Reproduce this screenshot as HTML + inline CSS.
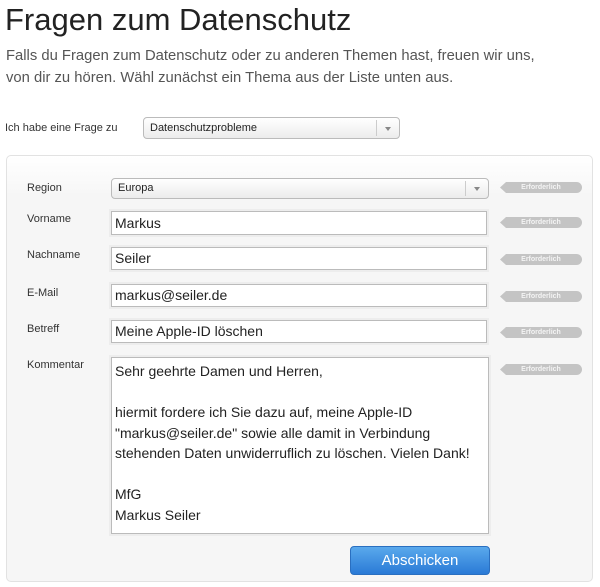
<!DOCTYPE html><html><head><meta charset="utf-8"><style>
body{margin:0;width:600px;height:587px;background:#fff;font-family:"Liberation Sans",sans-serif;position:relative;overflow:hidden}
.a{position:absolute}
h1{position:absolute;left:5px;top:2px;margin:0;font-weight:normal;font-size:31px;color:#222}
.intro{left:6px;top:45px;font-size:14.8px;line-height:22px;color:#555}
.lbl{font-size:11px;color:#333}
.sel{border:1px solid #bbb;border-radius:4px;background:linear-gradient(#fff,#ececec);font-size:11px;color:#222;box-sizing:border-box;padding:0 6px}
.sel:after{content:"";position:absolute;right:0;top:2px;bottom:2px;width:22px;border-left:1px solid #ccc}
.tri{position:absolute;width:0;height:0;border-left:3px solid transparent;border-right:3px solid transparent;border-top:4px solid #888}
.inp{border:1px solid #bbb;background:#fff;box-shadow:0 0 0 2px #ededed;font-size:14px;color:#222;box-sizing:border-box;padding:0 3px}
.badge{left:500px;width:82px;height:11px;background:#c4c4c4;border-radius:6px;font-size:7px;color:#f4f4f4;text-align:center;line-height:11px;font-weight:bold;clip-path:polygon(6px 0,100% 0,100% 100%,6px 100%,0 50%)}
</style></head><body>
<h1>Fragen zum Datenschutz</h1>
<div class="a intro">Falls du Fragen zum Datenschutz oder zu anderen Themen hast, freuen wir uns,<br>von dir zu hören. Wähl zunächst ein Thema aus der Liste unten aus.</div>
<div class="a lbl" style="left:5px;top:122px">Ich habe eine Frage zu</div>
<div class="a sel" style="left:143px;top:117px;width:257px;height:22px;line-height:20px">Datenschutzprobleme<span class="tri" style="right:8px;top:9px"></span></div>
<div class="a" style="left:6px;top:155px;width:587px;height:427px;border:1px solid #e2e2e2;border-radius:5px;background:linear-gradient(#fff,#f6f6f6 40px);box-sizing:border-box"></div>
<div class="a lbl" style="left:27px;top:182px">Region</div>
<div class="a sel" style="left:111px;top:178px;width:378px;height:21px;line-height:19px">Europa<span class="tri" style="right:8px;top:8px"></span></div>
<div class="a lbl" style="left:27px;top:213px">Vorname</div>
<div class="a inp" style="left:111px;top:211px;width:376px;height:24px;line-height:22px">Markus</div>
<div class="a lbl" style="left:27px;top:249px">Nachname</div>
<div class="a inp" style="left:111px;top:247px;width:376px;height:23px;line-height:21px">Seiler</div>
<div class="a lbl" style="left:27px;top:287px">E-Mail</div>
<div class="a inp" style="left:111px;top:284px;width:376px;height:23px;line-height:21px">markus@seiler.de</div>
<div class="a lbl" style="left:27px;top:323px">Betreff</div>
<div class="a inp" style="left:111px;top:320px;width:376px;height:23px;line-height:21px">Meine Apple-ID löschen</div>
<div class="a lbl" style="left:27px;top:359px">Kommentar</div>
<div class="a inp" style="left:111px;top:357px;width:378px;height:177px;padding:3px 3px;line-height:20.5px">Sehr geehrte Damen und Herren,<br><br>hiermit fordere ich Sie dazu auf, meine Apple-ID "markus@seiler.de" sowie alle damit in Verbindung stehenden Daten unwiderruflich zu löschen. Vielen Dank!<br><br>MfG<br>Markus Seiler</div>
<div class="a badge" style="top:182px">Erforderlich</div>
<div class="a badge" style="top:217px">Erforderlich</div>
<div class="a badge" style="top:254px">Erforderlich</div>
<div class="a badge" style="top:291px">Erforderlich</div>
<div class="a badge" style="top:327px">Erforderlich</div>
<div class="a badge" style="top:364px">Erforderlich</div>
<div class="a" style="left:350px;top:546px;width:140px;height:29px;border-radius:4px;background:linear-gradient(#5aa9ec,#2a7ad6);border:1px solid #2a6fc0;box-sizing:border-box;color:#fff;font-size:15px;text-align:center;line-height:27px">Abschicken</div>
</body></html>
